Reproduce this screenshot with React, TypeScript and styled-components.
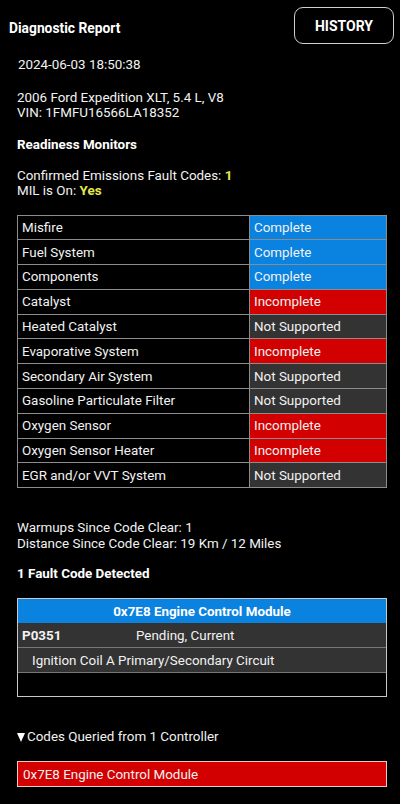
import React from 'react';
import styled, { createGlobalStyle } from 'styled-components';

type Status = 'complete' | 'incomplete' | 'unsupported';

const GlobalStyle = createGlobalStyle`
    body {
        margin: 0;
        background: #000;
        color: #f2f2f2;
        font-family: Roboto, 'Noto Sans', sans-serif;
        font-size: 13.4px;
    }
`;

const statusColors: Record<Status, string> = {
    complete: '#0a82e0',
    incomplete: '#d20000',
    unsupported: '#333333',
};

const statusLabels: Record<Status, string> = {
    complete: 'Complete',
    incomplete: 'Incomplete',
    unsupported: 'Not Supported',
};

const monitors: { name: string; status: Status }[] = [
    { name: 'Misfire', status: 'complete' },
    { name: 'Fuel System', status: 'complete' },
    { name: 'Components', status: 'complete' },
    { name: 'Catalyst', status: 'incomplete' },
    { name: 'Heated Catalyst', status: 'unsupported' },
    { name: 'Evaporative System', status: 'incomplete' },
    { name: 'Secondary Air System', status: 'unsupported' },
    { name: 'Gasoline Particulate Filter', status: 'unsupported' },
    { name: 'Oxygen Sensor', status: 'incomplete' },
    { name: 'Oxygen Sensor Heater', status: 'incomplete' },
    { name: 'EGR and/or VVT System', status: 'unsupported' },
];

const Page = styled.div`
    width: 400px;
    min-height: 804px;
    background: #000;
`;

const Header = styled.header`
    display: flex;
    align-items: center;
    justify-content: space-between;
    padding: 7px 6px 0 9px;
`;

const Title = styled.h1`
    margin: 4px 0 0;
    font-size: 13.8px;
    font-weight: 700;
    color: #fff;
`;

const HistoryButton = styled.button`
    width: 100px;
    height: 37px;
    border: 1.5px solid #d0d0d0;
    border-radius: 9px;
    background: transparent;
    color: #fff;
    font-family: Roboto, sans-serif;
    font-size: 14px;
    font-weight: 700;
`;

const Content = styled.main`
    padding: 0 13px 0 17px;
`;

const Line = styled.div<{ $top?: number; $indent?: number }>`
    margin-top: ${p => p.$top ?? 0}px;
    padding-left: ${p => p.$indent ?? 0}px;
    line-height: 15.5px;
`;

const SectionTitle = styled.h2<{ $top: number }>`
    margin: ${p => p.$top}px 0 0;
    font-size: 13.4px;
    font-weight: 700;
    line-height: 16px;
    color: #fff;
`;

const Highlight = styled.span`
    color: #e6e650;
    font-weight: 700;
`;

const MonitorTable = styled.div`
    margin-top: 16px;
    border: 1px solid #8c8c8c;
    border-bottom: none;
`;

const MonitorRow = styled.div`
    display: grid;
    grid-template-columns: 231px 1fr;
    height: 24.8px;
    box-sizing: border-box;
    border-bottom: 1px solid #8c8c8c;
`;

const Cell = styled.div<{ $bg?: string }>`
    display: flex;
    align-items: center;
    padding-left: 4px;
    background: ${p => p.$bg ?? 'transparent'};
    & + & {
        border-left: 1px solid #8c8c8c;
    }
`;

const FaultTable = styled.div`
    margin-top: 16px;
    height: 99px;
    box-sizing: border-box;
    border: 1px solid #c8c8c8;
`;

const FaultHeader = styled.div`
    height: 24px;
    display: flex;
    align-items: center;
    justify-content: center;
    background: #0a82e0;
    font-weight: 700;
    color: #fff;
`;

const FaultRow = styled.div<{ $indent: number }>`
    height: 25px;
    box-sizing: border-box;
    display: flex;
    align-items: center;
    padding-left: ${p => p.$indent}px;
    background: #333;
    border-bottom: 1px solid #777;
`;

const Code = styled.span`
    width: 114px;
    font-weight: 700;
`;

const Disclosure = styled.div`
    margin-top: 32px;
    display: flex;
    align-items: center;
    gap: 2px;
    line-height: 16px;
`;

const Triangle = styled.span`
    width: 0;
    height: 0;
    border-left: 4.5px solid transparent;
    border-right: 4.5px solid transparent;
    border-top: 9px solid #fff;
    margin-top: 1px;
`;

const ControllerBox = styled.div`
    margin-top: 16px;
    height: 26px;
    box-sizing: border-box;
    display: flex;
    align-items: center;
    padding-left: 5px;
    background: #d20000;
    border: 1px solid #e8c8c8;
`;

export default function App() {
    return (
        <Page>
            <GlobalStyle />
            <Header>
                <Title>Diagnostic Report</Title>
                <HistoryButton>HISTORY</HistoryButton>
            </Header>
            <Content>
                <Line $top={13} $indent={1}>2024-06-03 18:50:38</Line>
                <Line $top={17}>2006 Ford Expedition XLT, 5.4 L, V8</Line>
                <Line>VIN: 1FMFU16566LA18352</Line>
                <SectionTitle $top={16}>Readiness Monitors</SectionTitle>
                <Line $top={15}>
                    Confirmed Emissions Fault Codes: <Highlight>1</Highlight>
                </Line>
                <Line>
                    MIL is On: <Highlight>Yes</Highlight>
                </Line>
                <MonitorTable>
                    {monitors.map(m => (
                        <MonitorRow key={m.name}>
                            <Cell>{m.name}</Cell>
                            <Cell $bg={statusColors[m.status]}>{statusLabels[m.status]}</Cell>
                        </MonitorRow>
                    ))}
                </MonitorTable>
                <Line $top={32}>Warmups Since Code Clear: 1</Line>
                <Line>Distance Since Code Clear: 19 Km / 12 Miles</Line>
                <SectionTitle $top={15}>1 Fault Code Detected</SectionTitle>
                <FaultTable>
                    <FaultHeader>0x7E8 Engine Control Module</FaultHeader>
                    <FaultRow $indent={4}>
                        <Code>P0351</Code>
                        <span>Pending, Current</span>
                    </FaultRow>
                    <FaultRow $indent={14}>Ignition Coil A Primary/Secondary Circuit</FaultRow>
                </FaultTable>
                <Disclosure>
                    <Triangle />
                    <span>Codes Queried from 1 Controller</span>
                </Disclosure>
                <ControllerBox>0x7E8 Engine Control Module</ControllerBox>
            </Content>
        </Page>
    );
}
